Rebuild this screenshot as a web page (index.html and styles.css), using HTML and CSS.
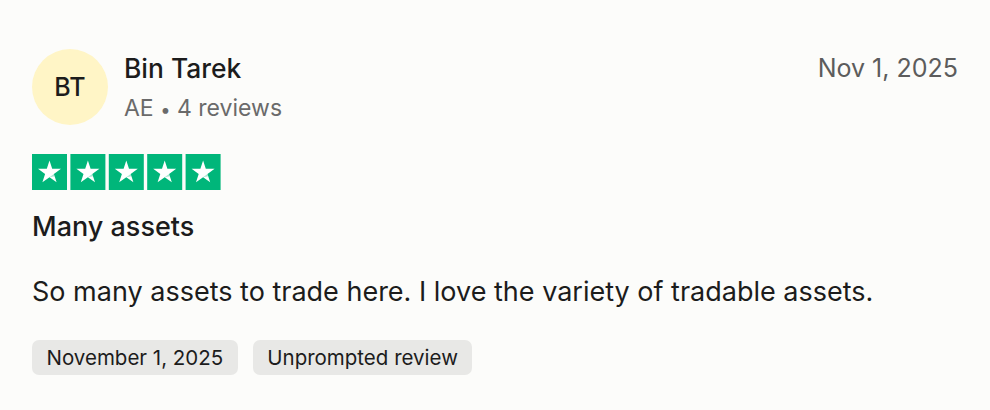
FILE: index.html
```html
<!DOCTYPE html>
<html lang="en">
<head>
<meta charset="utf-8">
<title>Review</title>
<link rel="stylesheet" href="styles.css">
</head>
<body>
<article class="review">
  <header class="review-head">
    <div class="avatar">BT</div>
    <div class="consumer">
      <div class="name">Bin Tarek</div>
      <div class="meta">AE <span class="dot">•</span> 4 reviews</div>
    </div>
    <time class="date">Nov 1, 2025</time>
  </header>
  <div class="stars" aria-label="Rated 5 out of 5">
    <svg width="189" height="36" viewBox="0 0 189 36">
      <defs>
        <g id="star">
          <rect width="35" height="36" fill="#00b67a"/>
          <path d="M17.5 6.5 L20.2 14.8 L29 14.8 L21.9 20 L24.6 28.3 L17.5 23.2 L10.4 28.3 L13.1 20 L6 14.8 L14.8 14.8 Z" fill="#ffffff"/>
          <path d="M21.9 20 L22.6 22.2 L17.5 23.2 Z" fill="#00b67a" opacity="0.35"/>
        </g>
      </defs>
      <use href="#star" x="0"/>
      <use href="#star" x="38.4"/>
      <use href="#star" x="76.8"/>
      <use href="#star" x="115.2"/>
      <use href="#star" x="153.6"/>
    </svg>
  </div>
  <h2 class="title">Many assets</h2>
  <p class="text">So many assets to trade here. I love the variety of tradable assets.</p>
  <div class="tags">
    <span class="tag">November 1, 2025</span>
    <span class="tag">Unprompted review</span>
  </div>
</article>
</body>
</html>
```
FILE: styles.css
```css
html, body {
  margin: 0;
  padding: 0;
  background: #fcfcfa;
}
body {
  font-family: Inter, "Noto Sans", sans-serif;
  color: #1c1c1c;
}
.review {
  padding: 49px 32px 0 32px;
}
.review-head {
  display: flex;
  align-items: flex-start;
  gap: 16px;
  height: 76px;
}
.avatar {
  width: 76px;
  height: 76px;
  border-radius: 50%;
  background: #fff5c6;
  display: flex;
  align-items: center;
  justify-content: center;
  font-size: 25px;
  font-weight: 500;
  color: #1c1c1c;
  flex: none;
}
.consumer {
  display: flex;
  flex-direction: column;
  padding-top: 2px;
}
.name {
  font-size: 26.4px;
  font-weight: 500;
  line-height: 34px;
  color: #1c1c1c;
}
.meta {
  margin-top: 7px;
  font-size: 23px;
  line-height: 32px;
  color: #6a6a6a;
}
.dot {
  font-size: 0.8em;
}
.date {
  margin-left: auto;
  font-size: 25px;
  line-height: 38px;
  color: #5c5c5c;
}
.stars {
  margin-top: 29px;
  height: 36px;
}
.stars svg {
  display: block;
}
.title {
  margin: 19px 0 0 0;
  font-size: 27px;
  font-weight: 500;
  line-height: 36px;
  color: #1c1c1c;
}
.text {
  margin: 29px 0 0 0;
  font-size: 27px;
  line-height: 36px;
  color: #1c1c1c;
}
.tags {
  display: flex;
  gap: 15px;
  margin-top: 30px;
}
.tag {
  background: #e8e8e6;
  border-radius: 7px;
  padding: 0 14.5px;
  height: 35px;
  display: flex;
  align-items: center;
  font-size: 20.5px;
  color: #1c1c1c;
}
```
